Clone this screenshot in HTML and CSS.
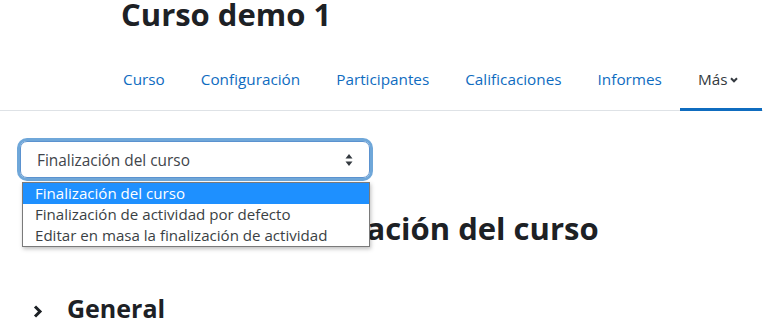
FILE: index.html
```html
<!DOCTYPE html>
<html lang="es">
<head>
    <meta charset="UTF-8">
    <meta name="viewport" content="width=device-width, initial-scale=1.0">
    <title>Finalización del curso</title>
    <link rel="stylesheet" href="styles.css">
</head>
<body>
    <div class="page_header">
        <h1 class="page_title">Curso demo 1</h1>
    </div>

    <nav class="course_nav">
        <ul class="course_nav_list">
            <li class="course_nav_item"><a class="course_nav_link" href="#">Curso</a></li>
            <li class="course_nav_item"><a class="course_nav_link" href="#">Configuración</a></li>
            <li class="course_nav_item"><a class="course_nav_link" href="#">Participantes</a></li>
            <li class="course_nav_item"><a class="course_nav_link" href="#">Calificaciones</a></li>
            <li class="course_nav_item"><a class="course_nav_link" href="#">Informes</a></li>
            <li class="course_nav_item"><a class="course_nav_link course_nav_more" href="#">Más<svg class="more_caret" width="8" height="6" viewBox="0 0 8 6"><path d="M1 1.3 L4 4.3 L7 1.3" fill="none" stroke="currentColor" stroke-width="2"/></svg></a></li>
        </ul>
    </nav>

    <div class="main">
        <div class="select_wrap">
            <div class="select_box">
                <span class="select_value">Finalización del curso</span>
                <svg class="select_arrows" width="8" height="12" viewBox="0 0 8 12"><path d="M4 0 L7.5 4.5 L0.5 4.5 Z M4 12 L7.5 7.5 L0.5 7.5 Z" fill="#343a40"/></svg>
            </div>
            <!-- open dropdown list -->
            <ul class="select_list">
                <li class="select_option selected">Finalización del curso</li>
                <li class="select_option">Finalización de actividad por defecto</li>
                <li class="select_option">Editar en masa la finalización de actividad</li>
            </ul>
        </div>

        <h2 class="main_head">Configurar la finalización del curso</h2>

        <div class="section">
            <svg class="section_toggle" width="10" height="13" viewBox="0 0 10 13"><path d="M2 1.5 L7 6.5 L2 11.5" fill="none" stroke="#1d2125" stroke-width="3"/></svg>
            <h3 class="section_head">General</h3>
        </div>
    </div>
</body>
</html>
```

FILE: styles.css
```css
body{
    margin: 0px;
    padding: 0px;
    font-family: "Open Sans", "Noto Sans", sans-serif;
    color: #1d2125;
    background-color: white;
    overflow: hidden;
}
.page_header{
    padding-left: 121px;
}
.page_title{
    margin: -4px 0 0 0;
    font-size: 31px;
    font-weight: 700;
    line-height: 36px;
}

.course_nav{
    margin-top: 24px;
    border-bottom: 1px solid #dee2e6;
}
.course_nav_list{
    display: flex;
    margin: 0;
    padding: 0 0 0 105px;
    list-style: none;
}
.course_nav_item{
    flex-shrink: 0;
    margin-bottom: -1px;
}
.course_nav_link{
    display: block;
    padding: 12px 18px 17px 18px;
    font-size: 15.3px;
    line-height: 22.5px;
    color: #0f6cbf;
    text-decoration: none;
    white-space: nowrap;
    border-bottom: 3px solid transparent;
}
.course_nav_more{
    color: #343a40;
    padding-right: 24px;
    border-bottom-color: #0f6cbf;
}
.more_caret{
    margin-left: 3px;
    vertical-align: 2px;
}

.main{
    padding: 30px 20px 0 20px;
}
.select_wrap{
    position: relative;
    width: 350px;
}
.select_box{
    display: flex;
    align-items: center;
    justify-content: space-between;
    height: 37px;
    box-sizing: border-box;
    padding: 2px 16px 0 16px;
    border: 1px solid #5b92cf;
    border-radius: 7px;
    box-shadow: 0 0 0 3px rgba(15, 108, 191, 0.6);
    font-size: 15.4px;
    color: #3f454b;
}
.select_list{
    position: absolute;
    top: 41px;
    left: 2px;
    width: 348px;
    box-sizing: border-box;
    margin: 0;
    padding: 0;
    list-style: none;
    background-color: white;
    border: 1px solid #7a7a7a;
    box-shadow: 1px 2px 4px rgba(0, 0, 0, 0.25);
    z-index: 2;
}
.select_option{
    padding-left: 12px;
    height: 21px;
    line-height: 21px;
    font-size: 15.1px;
    color: #3a3f44;
    white-space: nowrap;
}
.select_option.selected{
    background-color: #1e90ff;
    color: white;
}

.main_head{
    margin: 32px 0 0 42px;
    font-size: 31px;
    font-weight: 700;
    line-height: 37px;
}

.section{
    display: flex;
    align-items: flex-start;
    margin-top: 47px;
}
.section_toggle{
    margin: 11px 24px 0 13px;
}
.section_head{
    margin: 0;
    font-size: 25px;
    font-weight: 700;
    line-height: 29px;
}
```
